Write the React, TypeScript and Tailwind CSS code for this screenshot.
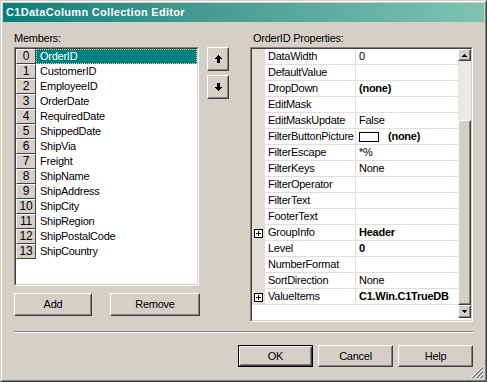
import React from "react";

const members = [
  "OrderID",
  "CustomerID",
  "EmployeeID",
  "OrderDate",
  "RequiredDate",
  "ShippedDate",
  "ShipVia",
  "Freight",
  "ShipName",
  "ShipAddress",
  "ShipCity",
  "ShipRegion",
  "ShipPostalCode",
  "ShipCountry",
];

type Prop = { name: string; value?: string; bold?: boolean; plus?: boolean; picture?: boolean };

const props: Prop[] = [
  { name: "DataWidth", value: "0" },
  { name: "DefaultValue" },
  { name: "DropDown", value: "(none)", bold: true },
  { name: "EditMask" },
  { name: "EditMaskUpdate", value: "False" },
  { name: "FilterButtonPicture", value: "(none)", bold: true, picture: true },
  { name: "FilterEscape", value: "*%" },
  { name: "FilterKeys", value: "None" },
  { name: "FilterOperator" },
  { name: "FilterText" },
  { name: "FooterText" },
  { name: "GroupInfo", value: "Header", bold: true, plus: true },
  { name: "Level", value: "0", bold: true },
  { name: "NumberFormat" },
  { name: "SortDirection", value: "None" },
  { name: "ValueItems", value: "C1.Win.C1TrueDB", bold: true, plus: true },
];

function Raised({ className = "", children, def = false }: { className?: string; children?: React.ReactNode; def?: boolean }) {
  const inner = (
    <div className="h-full w-full border border-t-white border-l-white border-r-[#404040] border-b-[#404040]">
      <div className="h-full w-full border border-t-[#d4d0c8] border-l-[#d4d0c8] border-r-[#808080] border-b-[#808080] flex items-center justify-center">
        {children}
      </div>
    </div>
  );
  if (def) {
    return <div className={`border border-black ${className}`}>{inner}</div>;
  }
  return <div className={className}>{inner}</div>;
}

function ArrowIcon({ up }: { up: boolean }) {
  return (
    <svg width="7" height="8" viewBox="0 0 7 8" shapeRendering="crispEdges">
      {up ? (
        <>
          <rect x="3" y="0" width="1" height="1" fill="#000" />
          <rect x="2" y="1" width="3" height="1" fill="#000" />
          <rect x="1" y="2" width="5" height="1" fill="#000" />
          <rect x="0" y="3" width="7" height="1" fill="#000" />
          <rect x="2" y="4" width="3" height="4" fill="#000" />
        </>
      ) : (
        <>
          <rect x="2" y="0" width="3" height="4" fill="#000" />
          <rect x="0" y="4" width="7" height="1" fill="#000" />
          <rect x="1" y="5" width="5" height="1" fill="#000" />
          <rect x="2" y="6" width="3" height="1" fill="#000" />
          <rect x="3" y="7" width="1" height="1" fill="#000" />
        </>
      )}
    </svg>
  );
}

function SmallTri({ up }: { up: boolean }) {
  return (
    <svg width="5" height="3" viewBox="0 0 5 3" shapeRendering="crispEdges">
      {up ? (
        <>
          <rect x="2" y="0" width="1" height="1" fill="#000" />
          <rect x="1" y="1" width="3" height="1" fill="#000" />
          <rect x="0" y="2" width="5" height="1" fill="#000" />
        </>
      ) : (
        <>
          <rect x="0" y="0" width="5" height="1" fill="#000" />
          <rect x="1" y="1" width="3" height="1" fill="#000" />
          <rect x="2" y="2" width="1" height="1" fill="#000" />
        </>
      )}
    </svg>
  );
}

function Sunken({ className = "", children }: { className?: string; children?: React.ReactNode }) {
  return (
    <div className={`border border-t-[#808080] border-l-[#808080] border-r-white border-b-white ${className}`}>
      <div className="h-full w-full border border-t-[#404040] border-l-[#404040] border-r-[#d4d0c8] border-b-[#d4d0c8] overflow-hidden">
        {children}
      </div>
    </div>
  );
}

export default function App() {
  return (
    <div
      className="w-[487px] h-[382px] bg-[#d4d0c8] border border-t-[#d4d0c8] border-l-[#d4d0c8] border-r-[#404040] border-b-[#404040] text-[11px] tracking-[-0.25px] text-black overflow-hidden"
      style={{ fontFamily: '"Liberation Sans", Arial, sans-serif' }}
    >
      <div className="h-full w-full border border-t-white border-l-white border-r-[#808080] border-b-[#808080] p-px flex flex-col">
        {/* Title bar */}
        <div className="h-[19px] shrink-0 bg-gradient-to-r from-[#007f7b] to-[#7dc3b1] flex items-center pl-[3px] text-white font-bold text-[11px] tracking-[0.3px] leading-none">
          C1DataColumn Collection Editor
        </div>

        {/* Body */}
        <div className="relative flex-1 flex flex-col">
          <div className="flex pl-[11px] pt-[10px]">
            {/* Left column */}
            <div className="w-[186px] flex flex-col">
              <div className="h-[13px] leading-[13px]">Members:</div>
              <Sunken className="mt-[2px] h-[239px] w-[185px]">
                <div className="bg-white h-full w-full flex flex-col">
                  {members.map((m, i) => (
                    <div key={m} className="flex h-[15px] shrink-0">
                      <div className="w-[20px] h-[15px] bg-[#d4d0c8] border border-t-white border-l-white border-r-[#404040] border-b-[#404040] text-center leading-[13px] text-[12px]">
                        {i}
                      </div>
                      {i === 0 ? (
                        <div className="flex-1 bg-[#008080] text-white border border-dotted border-[#d8d890] pl-[3px] leading-[13px]">
                          {m}
                        </div>
                      ) : (
                        <div className="flex-1 pl-[4px] leading-[15px]">{m}</div>
                      )}
                    </div>
                  ))}
                </div>
              </Sunken>
              <div className="mt-[7px] flex justify-between h-[23px]">
                <Raised className="w-[78px] h-[23px]">Add</Raised>
                <Raised className="w-[90px] h-[23px]">Remove</Raised>
              </div>
            </div>

            {/* Arrow buttons */}
            <div className="ml-[7px] mt-[15px] flex flex-col gap-[4px]">
              <Raised className="w-[22px] h-[24px]">
                <ArrowIcon up />
              </Raised>
              <Raised className="w-[22px] h-[24px]">
                <ArrowIcon up={false} />
              </Raised>
            </div>

            {/* Right column */}
            <div className="ml-[21px] w-[223px] flex flex-col">
              <div className="h-[13px] leading-[13px] pl-[3px]">OrderID Properties:</div>
              <Sunken className="mt-[2px] h-[275px] w-[223px]">
                <div className="bg-white h-full w-full flex">
                  <div className="flex-1 flex flex-col overflow-hidden">
                    {props.map((p) => (
                      <div key={p.name} className="flex h-[16px] shrink-0">
                        <div className="w-[13px] shrink-0 bg-[#e2ded6] flex items-center justify-center">
                          {p.plus && (
                            <div className="w-[9px] h-[9px] border border-black bg-white relative">
                              <div className="absolute left-[1px] top-[3px] w-[5px] h-px bg-black" />
                              <div className="absolute left-[3px] top-[1px] w-px h-[5px] bg-black" />
                            </div>
                          )}
                        </div>
                        <div className="w-[91px] shrink-0 border-b border-r border-[#e2ded6] pl-[3px] leading-[15px] whitespace-nowrap overflow-hidden">
                          {p.name}
                        </div>
                        <div className="flex-1 border-b border-[#e2ded6] pl-[3px] leading-[15px] whitespace-nowrap overflow-hidden flex items-center">
                          {p.picture && (
                            <div className="w-[20px] h-[10px] border border-black bg-white mr-[9px] shrink-0" />
                          )}
                          <span className={p.bold ? "font-bold" : ""}>{p.value ?? ""}</span>
                        </div>
                      </div>
                    ))}
                  </div>
                  {/* Scrollbar */}
                  <div className="w-[13px] shrink-0 flex flex-col">
                    <Raised className="w-[13px] h-[12px] bg-[#d4d0c8]">
                      <SmallTri up />
                    </Raised>
                    <div className="h-[59px] bg-[#ebe9e4]" />
                    <Raised className="w-[13px] h-[185px] bg-[#d4d0c8]" />
                    <Raised className="w-[13px] h-[13px] bg-[#d4d0c8]">
                      <SmallTri up={false} />
                    </Raised>
                  </div>
                </div>
              </Sunken>
            </div>
          </div>

          {/* Separator */}
          <div className="ml-[11px] mt-[9px] w-[459px] h-[2px] border-t border-t-[#808080] border-b border-b-white" />

          {/* Dialog buttons */}
          <div className="mt-[12px] flex justify-end gap-[5px] pr-[11px]">
            <Raised def className="w-[75px] h-[22px]">OK</Raised>
            <Raised className="w-[75px] h-[22px]">Cancel</Raised>
            <Raised className="w-[75px] h-[22px]">Help</Raised>
          </div>

          {/* Resize grip */}
          <svg className="absolute right-0 bottom-0" width="13" height="13" viewBox="0 0 13 13" shapeRendering="crispEdges">
            {[0, 4, 8].map((o) => (
              <g key={o}>
                <line x1={12} y1={o + 1} x2={o + 1} y2={12} stroke="#808080" strokeWidth="1" />
                <line x1={12} y1={o + 2} x2={o + 2} y2={12} stroke="#808080" strokeWidth="1" />
                <line x1={12} y1={o} x2={o} y2={12} stroke="#ffffff" strokeWidth="1" />
              </g>
            ))}
          </svg>
        </div>
      </div>
    </div>
  );
}
